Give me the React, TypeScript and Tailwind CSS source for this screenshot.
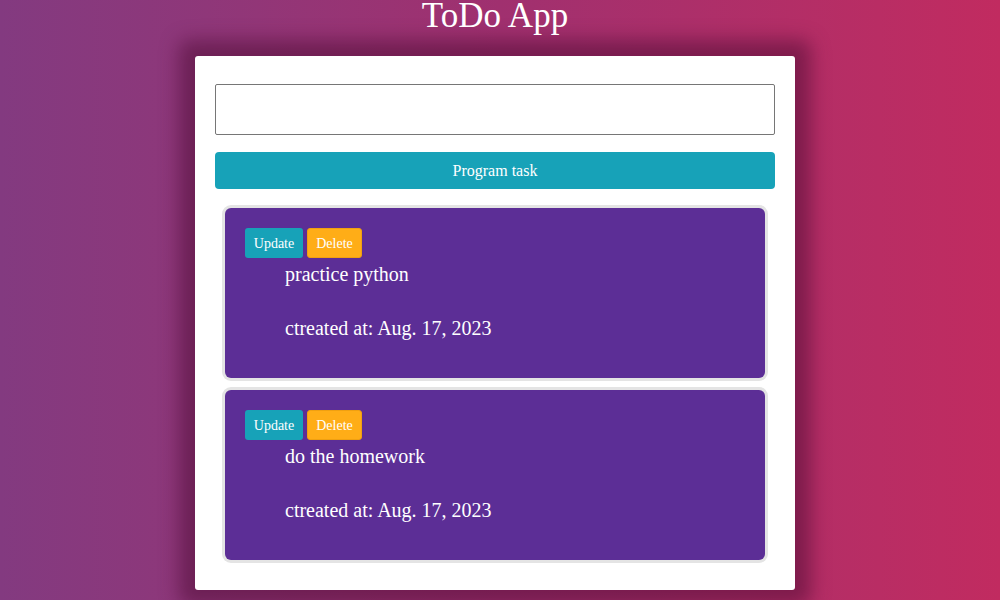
const tasks = [
	{ id: 1, title: "practice python", created: "Aug. 17, 2023" },
	{ id: 2, title: "do the homework", created: "Aug. 17, 2023" },
];

function TaskItem({ title, created }: { title: string; created: string }) {
	return (
		<div className="rounded-md bg-[#5c2e96] px-5 pt-5 pb-[38px] shadow-[0_0_0_3px_#e4e4e4] text-white">
			<div className="flex gap-1">
				<button
					type="button"
					className="h-[30px] w-[58px] rounded-[3px] bg-[#17a2b8] text-[14px] text-white"
				>
					Update
				</button>
				<button
					type="button"
					className="h-[30px] w-[55px] rounded-[3px] border border-[#f0a010] bg-[#ffad17] text-[14px] text-white"
				>
					Delete
				</button>
			</div>
			<p className="mt-[5px] pl-10 text-[20px] leading-[23px]">{title}</p>
			<p className="mt-[31px] pl-10 text-[20px] leading-[23px]">
				ctreated at: {created}
			</p>
		</div>
	);
}

export default function App() {
	return (
		<div
			className="min-h-[600px] overflow-hidden bg-gradient-to-r from-[#833a80] via-[#a0306f] to-[#c12b60] pr-[10px]"
			style={{ fontFamily: '"Liberation Serif", "Times New Roman", serif' }}
		>
			<h1 className="text-center text-[35px] leading-[32px] text-white">
				ToDo App
			</h1>

			{/* Card */}
			<div className="mx-auto mt-[24px] w-[600px] rounded-[3px] bg-white px-5 pt-7 pb-[30px] shadow-[0_0_18px_16px_rgba(75,10,50,0.5)]">
				<input
					type="text"
					className="block h-[51px] w-full rounded-[2px] border border-[#767676] px-2 outline-none"
				/>
				<button
					type="button"
					className="mt-[17px] block h-[37px] w-full rounded-[4px] bg-[#17a2b8] text-[16px] text-white"
				>
					Program task
				</button>

				<div className="mt-[19px] mx-[10px] flex flex-col gap-[12px]">
					{tasks.map((t) => (
						<TaskItem key={t.id} title={t.title} created={t.created} />
					))}
				</div>
			</div>
		</div>
	);
}
